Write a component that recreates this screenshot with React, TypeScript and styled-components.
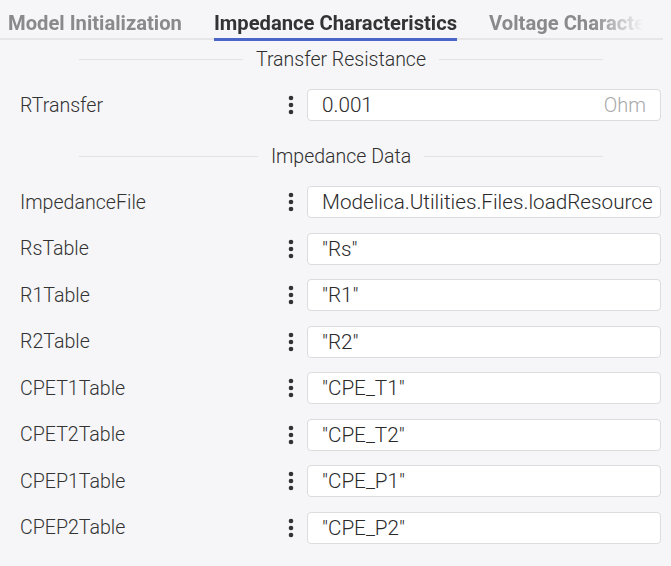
import React from "react";
import styled, { createGlobalStyle } from "styled-components";

const Global = createGlobalStyle`
  html, body { margin: 0; padding: 0; background: #f6f6f8; }
  body { font-family: Roboto, "Liberation Sans", sans-serif; color: #3a3a3a; }
  * { box-sizing: border-box; }
`;

const Page = styled.div`
  width: 671px;
  height: 566px;
  background: #f6f6f8;
  overflow: hidden;
`;

const TabBar = styled.div`
  display: flex;
  margin-right: 8px;
  border-bottom: 2px solid #e6e6e9;
`;

const TabList = styled.div`
  flex: 1;
  display: flex;
  gap: 32px;
  padding-left: 8px;
  height: 41px;
  margin-bottom: -3px;
  overflow: hidden;
  white-space: nowrap;
  -webkit-mask-image: linear-gradient(to right, #000 calc(100% - 70px), transparent calc(100% - 20px));
  mask-image: linear-gradient(to right, #000 calc(100% - 70px), transparent calc(100% - 20px));
`;

const Tab = styled.div<{ $active?: boolean }>`
  flex: none;
  display: flex;
  align-items: center;
  height: 41px;
  padding-top: 7px;
  font-size: 20.2px;
  font-weight: 700;
  color: ${(p) => (p.$active ? "#333333" : "#8a8a8c")};
  border-bottom: 3px solid ${(p) => (p.$active ? "#4a66c8" : "transparent")};
`;

const Content = styled.div`
  padding-top: 8px;
`;

const Section = styled.div`
  & + & {
    margin-top: 24px;
  }
`;

const SectionHeader = styled.div`
  display: flex;
  align-items: center;
  gap: 13px;
  height: 22px;
  margin: 0 68px 19px 79px;
  font-size: 19.5px;
  font-weight: 300;
  color: #2f2f2f;
  white-space: nowrap;
`;

const Rule = styled.div`
  flex: 1;
  height: 1px;
  background: #e2e2e5;
`;

const Rows = styled.div`
  display: flex;
  flex-direction: column;
  gap: 14.5px;
`;

const Row = styled.div`
  display: grid;
  grid-template-columns: 1fr 21px 354px;
  align-items: center;
  padding: 0 10px 0 20px;
  height: 32px;
`;

const Label = styled.div`
  font-size: 19.6px;
  font-weight: 300;
  color: #333;
  white-space: nowrap;
`;

const MenuButton = styled.div`
  display: flex;
  align-items: center;
  width: 10px;
  justify-content: center;
`;

const Field = styled.div`
  display: flex;
  align-items: center;
  justify-content: space-between;
  height: 32px;
  padding: 0 8px 0 14px;
  background: #ffffff;
  border: 1px solid #dcdcdf;
  border-radius: 4px;
  overflow: hidden;
  white-space: nowrap;
`;

const Value = styled.span`
  font-size: 20.7px;
  font-weight: 300;
  color: #2a2a2a;
`;

const Unit = styled.span`
  font-size: 20px;
  font-weight: 300;
  color: #a8a8aa;
  margin-right: 6px;
`;

const Dots = () => (
  <svg width="6" height="20" viewBox="0 0 6 20">
    <circle cx="3" cy="3" r="2.3" fill="#333" />
    <circle cx="3" cy="10" r="2.3" fill="#333" />
    <circle cx="3" cy="17" r="2.3" fill="#333" />
  </svg>
);

type Param = { name: string; value: string; unit?: string };

const sections: { title: string; params: Param[] }[] = [
  {
    title: "Transfer Resistance",
    params: [{ name: "RTransfer", value: "0.001", unit: "Ohm" }],
  },
  {
    title: "Impedance Data",
    params: [
      { name: "ImpedanceFile", value: "Modelica.Utilities.Files.loadResource" },
      { name: "RsTable", value: '"Rs"' },
      { name: "R1Table", value: '"R1"' },
      { name: "R2Table", value: '"R2"' },
      { name: "CPET1Table", value: '"CPE_T1"' },
      { name: "CPET2Table", value: '"CPE_T2"' },
      { name: "CPEP1Table", value: '"CPE_P1"' },
      { name: "CPEP2Table", value: '"CPE_P2"' },
    ],
  },
];

export default function App() {
  return (
    <Page>
      <Global />
      <TabBar>
        <TabList>
          <Tab>Model Initialization</Tab>
          <Tab $active>Impedance Characteristics</Tab>
          <Tab>Voltage Characteristics</Tab>
        </TabList>
      </TabBar>
      <Content>
        {sections.map((s) => (
          <Section key={s.title}>
            <SectionHeader>
              <Rule />
              <span>{s.title}</span>
              <Rule />
            </SectionHeader>
            <Rows>
              {s.params.map((p) => (
                <Row key={p.name}>
                  <Label>{p.name}</Label>
                  <MenuButton>
                    <Dots />
                  </MenuButton>
                  <Field>
                    <Value>{p.value}</Value>
                    {p.unit && <Unit>{p.unit}</Unit>}
                  </Field>
                </Row>
              ))}
            </Rows>
          </Section>
        ))}
      </Content>
    </Page>
  );
}
